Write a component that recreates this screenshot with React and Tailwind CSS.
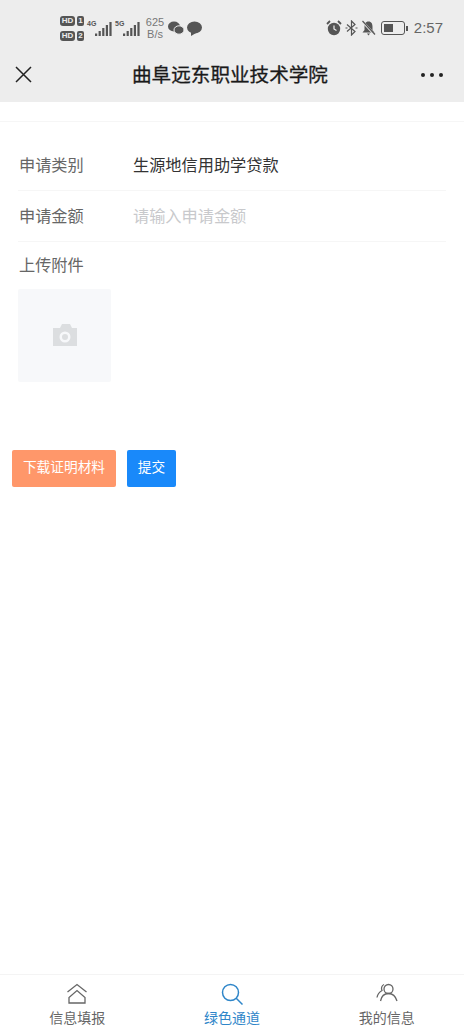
import React from "react";

const FONT = { fontFamily: '"Liberation Sans", "Noto Sans CJK SC", sans-serif' };

const Signal = () => (
  <svg width="17" height="15" viewBox="0 0 17 15" fill="#555">
    <rect x="0" y="11.5" width="2.2" height="2.5" />
    <rect x="3.6" y="9" width="2.2" height="5" />
    <rect x="7.2" y="6" width="2.2" height="8" />
    <rect x="10.8" y="3" width="2.2" height="11" />
    <rect x="14.4" y="0" width="2.2" height="14" />
  </svg>
);

const HdTag = ({ n }) => (
  <div className="flex items-center gap-[2px]">
    <span className="bg-[#555] text-[#ededed] rounded-[3px] w-[15px] h-[10px] text-[8px] leading-[10px] font-bold text-center">HD</span>
    <span className="bg-[#555] text-[#ededed] rounded-[2px] w-[7px] h-[10px] text-[8px] leading-[10px] font-bold text-center">{n}</span>
  </div>
);

const StatusBar = () => (
  <div className="h-[53px] flex items-start justify-between pl-[60px] pr-[21px] text-[#666]">
    <div className="flex items-center mt-[14px] h-[28px]">
      <div className="flex flex-col gap-[5px] w-[27px]">
        <HdTag n="1" />
        <HdTag n="2" />
      </div>
      <div className="relative w-[25px] h-[20px]">
        <span className="absolute left-0 top-[2px] text-[7px] leading-[8px] font-bold text-[#555]">4G</span>
        <div className="absolute left-[8px] top-[4px]"><Signal /></div>
      </div>
      <div className="relative w-[25px] h-[20px] ml-[3px]">
        <span className="absolute left-0 top-[2px] text-[7px] leading-[8px] font-bold text-[#555]">5G</span>
        <div className="absolute left-[8px] top-[4px]"><Signal /></div>
      </div>
      <div className="ml-[5px] w-[20px] text-[11px] leading-[12px] text-center text-[#777]">
        <div>625</div>
        <div>B/s</div>
      </div>
      {/* wechat */}
      <svg className="ml-[3px]" width="16" height="14" viewBox="0 0 16 14" fill="#555">
        <ellipse cx="6" cy="5.5" rx="6" ry="5" />
        <ellipse cx="11" cy="9" rx="5" ry="4.2" stroke="#ededed" strokeWidth="1" />
      </svg>
      {/* message bubble */}
      <svg className="ml-[3px]" width="15" height="15" viewBox="0 0 15 15" fill="#555">
        <ellipse cx="7.5" cy="6.5" rx="7.5" ry="6" />
        <path d="M4 10 L4 15 L9 12 Z" />
      </svg>
    </div>
    <div className="flex items-center mt-[14px] h-[28px]">
      {/* alarm */}
      <svg width="16" height="16" viewBox="0 0 16 16">
        <circle cx="8" cy="9" r="6.2" fill="#555" />
        <path d="M8 5.5 V9 L10.5 10.5" fill="none" stroke="#ededed" strokeWidth="1.2" />
        <path d="M1 4 L4 1 M15 4 L12 1" stroke="#555" strokeWidth="1.8" />
      </svg>
      {/* bluetooth */}
      <svg className="ml-[3px]" width="13" height="16" viewBox="0 0 13 16" fill="none" stroke="#555" strokeWidth="1.2">
        <path d="M2 4.5 L10 11.5 L6.5 15 L6.5 1 L10 4.5 L2 11.5" />
        <path d="M0.5 8 H2.5 M10.5 8 H12.5" />
      </svg>
      {/* muted bell */}
      <svg className="ml-[3px]" width="15" height="16" viewBox="0 0 15 16" fill="#555">
        <path d="M7.5 1.5 C4.5 1.5 3.5 4 3.5 6.5 V10 L1.5 12.5 H13.5 L11.5 10 V6.5 C11.5 4 10.5 1.5 7.5 1.5 Z" />
        <path d="M6 13.5 H9 L7.5 15.5 Z" />
        <path d="M1 1 L14 15" stroke="#ededed" strokeWidth="2.4" />
        <path d="M1.5 1 L14 14.5" stroke="#555" strokeWidth="1.2" />
      </svg>
      {/* battery */}
      <div className="ml-[5px] flex items-center">
        <div className="w-[24px] h-[14px] border-[1.5px] border-[#555] rounded-[3px] p-[2px]">
          <div className="w-[9px] h-full bg-[#555]" />
        </div>
        <div className="w-[2px] h-[5px] bg-[#555] ml-[1px]" />
      </div>
      <span className="ml-[6px] text-[15px] text-[#666]">2:57</span>
    </div>
  </div>
);

const Header = () => (
  <div className="bg-[#ededed]">
    <StatusBar />
    <div className="h-[49px] relative flex items-center justify-center pb-[3px] pr-[4px]">
      <svg className="absolute left-[15px] top-[13px]" width="17" height="17" viewBox="0 0 17 17" stroke="#222" strokeWidth="1.5">
        <path d="M1 1 L16 16 M16 1 L1 16" />
      </svg>
      <span className="text-[19.6px] text-[#1a1a1a] [-webkit-text-stroke:0.3px_#1a1a1a]">曲阜远东职业技术学院</span>
      <div className="absolute left-[421px] top-[20px] flex gap-[5px]">
        <span className="w-[4px] h-[4px] rounded-full bg-[#222]" />
        <span className="w-[4px] h-[4px] rounded-full bg-[#222]" />
        <span className="w-[4px] h-[4px] rounded-full bg-[#222]" />
      </div>
    </div>
  </div>
);

const Row = ({ label, children }) => (
  <div className="h-[51px] pt-[1px] flex items-center border-b border-[#f6f6f6] text-[16.2px]">
    <span className="w-[115px] pl-px text-[#666]">{label}</span>
    {children}
  </div>
);

const Tab = ({ label, active, children }) => (
  <div className="flex-1 flex flex-col items-center pt-[7px]">
    <div className="h-[24px] flex items-center justify-center">{children}</div>
    <span className={`mt-[2px] text-[14px] leading-[20px] ${active ? "text-[#2f86c9]" : "text-[#666]"}`}>{label}</span>
  </div>
);

export default function App() {
  return (
    <div className="w-[464px] h-[1032px] bg-white flex flex-col overflow-hidden" style={FONT}>
      <Header />
      <div className="h-[20px] border-b border-[#f6f6f6]" />

      <div className="pl-[18px] pr-[18px] pt-[18px]">
        <Row label="申请类别">
          <span className="text-[#333]">生源地信用助学贷款</span>
        </Row>
        <Row label="申请金额">
          <span className="text-[#c8c9cc]">请输入申请金额</span>
        </Row>
        <div className="pt-[11px] text-[16.2px] leading-[24px] pl-px text-[#666]">上传附件</div>
        <div className="mt-[12px] w-[93px] h-[93px] bg-[#f7f8fa] rounded-[2px] flex items-center justify-center">
          <svg width="26" height="23" viewBox="0 0 26 23" fill="#dcdee0">
            <path fillRule="evenodd" d="M1 4 H8 L10 0 H18 L20 4 H25 V22 H1 Z M13 7.5 A5.5 5.5 0 1 0 13 18.5 A5.5 5.5 0 1 0 13 7.5 Z M13 10 A3 3 0 1 1 13 16 A3 3 0 1 1 13 10 Z" />
          </svg>
        </div>
      </div>

      <div className="mt-[68px] pl-[12px] flex gap-[11px]">
        <button className="w-[104px] h-[37px] bg-[#ff976a] text-white text-[13.7px] rounded-[2px]">下载证明材料</button>
        <button className="w-[49px] h-[37px] bg-[#1989fa] text-white text-[13.7px] rounded-[2px]">提交</button>
      </div>

      <div className="flex-1" />

      <div className="h-[58px] border-t border-[#f4f4f4] flex">
        <Tab label="信息填报">
          <svg width="22" height="22" viewBox="0 0 22 22" fill="none" stroke="#666" strokeWidth="1.3">
            <path d="M1.5 9 L11 1.5 L20.5 9" />
            <path d="M3 20 V14.5 L11 7.5 L19 14.5 V20 Z" />
          </svg>
        </Tab>
        <Tab label="绿色通道" active>
          <svg width="22" height="22" viewBox="0 0 22 22" fill="none" stroke="#2f86c9" strokeWidth="1.5">
            <circle cx="9.5" cy="9.5" r="8" />
            <path d="M15 15 L21.5 21.5" />
          </svg>
        </Tab>
        <Tab label="我的信息">
          <svg width="22" height="22" viewBox="0 0 22 22" fill="none" stroke="#666" strokeWidth="1.3">
            <circle cx="12.5" cy="6" r="4.5" />
            <path d="M4.5 18 C5.5 13 8.5 10.5 12.5 10.5 C16.5 10.5 19.5 13 21 18" />
            <path d="M8 1.5 C5.5 2.5 5 5.5 6 7.5 C3.5 9 1.5 11.5 1 14.5" />
          </svg>
        </Tab>
      </div>
    </div>
  );
}
